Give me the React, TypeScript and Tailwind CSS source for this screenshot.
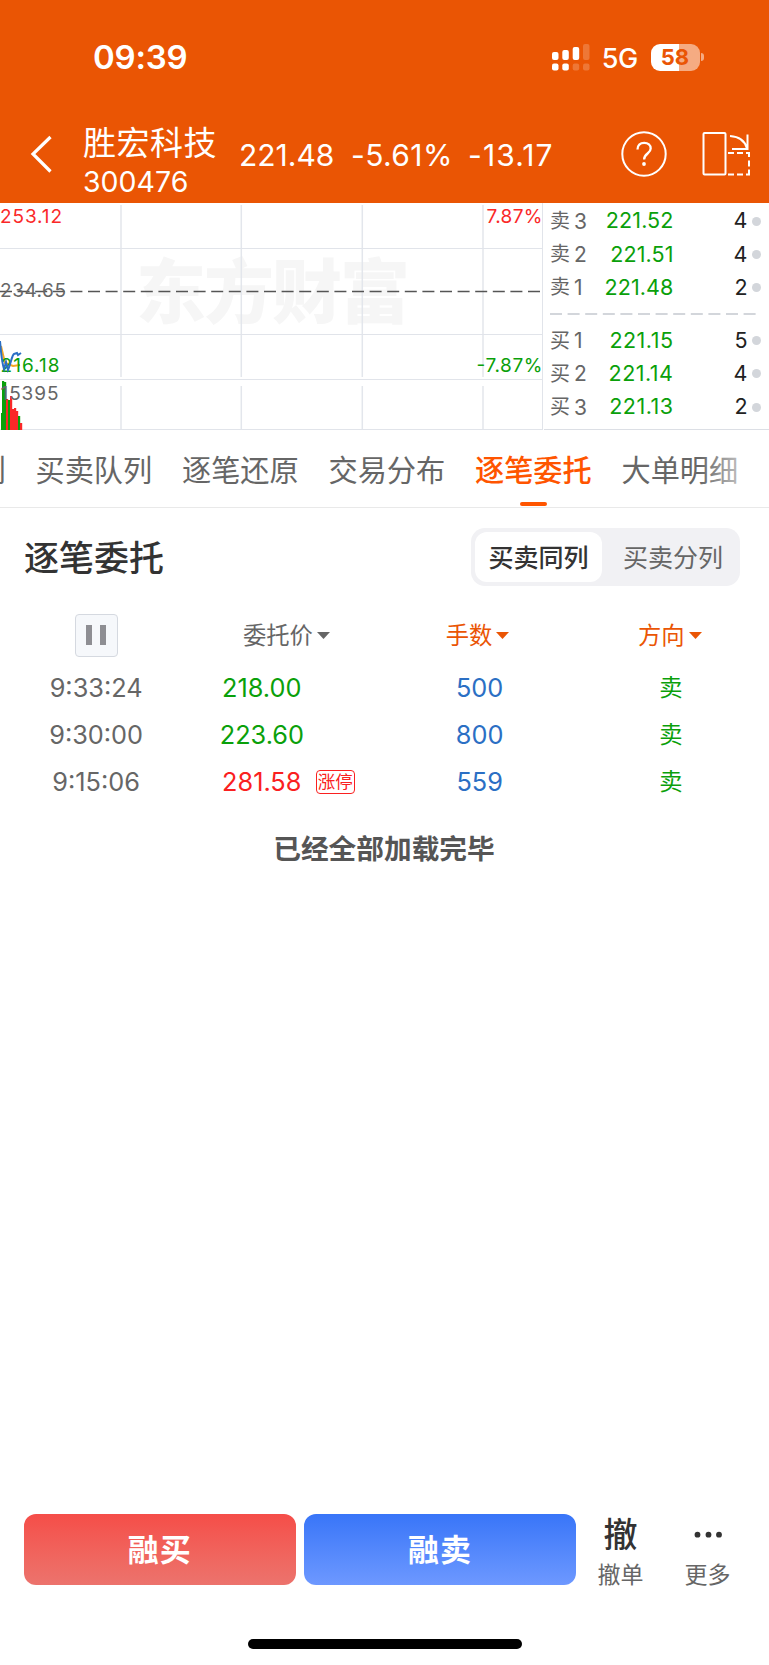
import React from 'react';

interface Quote {
  label: string;
  level: number;
  price: string;
  volume: number;
}

interface Order {
  time: string;
  price: string;
  volume: string;
  side: string;
  up?: boolean;
  tag?: string;
}

const asks: Quote[] = [
  { label: '卖', level: 3, price: '221.52', volume: 4 },
  { label: '卖', level: 2, price: '221.51', volume: 4 },
  { label: '卖', level: 1, price: '221.48', volume: 2 },
];

const bids: Quote[] = [
  { label: '买', level: 1, price: '221.15', volume: 5 },
  { label: '买', level: 2, price: '221.14', volume: 4 },
  { label: '买', level: 3, price: '221.13', volume: 2 },
];

const tabs = ['买卖队列', '逐笔还原', '交易分布', '逐笔委托', '大单明细'];

const orders: Order[] = [
  { time: '9:33:24', price: '218.00', volume: '500', side: '卖' },
  { time: '9:30:00', price: '223.60', volume: '800', side: '卖' },
  { time: '9:15:06', price: '281.58', volume: '559', side: '卖', up: true, tag: '涨停' },
];

// x, top, colour of each volume bar
const bars: [number, number, string][] = [
  [1, 210, '#0aa00a'],
  [2, 178, '#0aa00a'],
  [4, 179, '#0aa00a'],
  [6, 196, '#fa2828'],
  [8, 197, '#0aa00a'],
  [10, 193, '#fa2828'],
  [12, 206, '#fa2828'],
  [14, 205, '#fa2828'],
  [16, 208, '#fa2828'],
  [18, 213, '#0aa00a'],
  [20, 220, '#fa2828'],
];

const StatusBar: React.FC = () => (
  <div className="flex h-[114px] items-center pl-[93px] pr-[65px]">
    <span className="pt-[1px] text-[33px] font-semibold leading-none tracking-[-0.2px]">09:39</span>
    <div className="ml-auto flex items-center">
      <svg width="38" height="28" viewBox="0 0 38 28" fill="#fff">
        <rect x="0" y="9" width="6.5" height="8" rx="2" />
        <rect x="10.3" y="7" width="6.5" height="10" rx="2" />
        <rect x="20.7" y="4" width="6.5" height="13" rx="2" />
        <rect x="31" y="1" width="6.5" height="16" rx="2" opacity="0.2" />
        <rect x="0" y="20.5" width="6.5" height="7" rx="2" />
        <rect x="10.3" y="20.5" width="6.5" height="7" rx="2" />
        <rect x="20.7" y="20.5" width="6.5" height="7" rx="2" opacity="0.2" />
        <rect x="31" y="20.5" width="6.5" height="7" rx="2" opacity="0.2" />
      </svg>
      <span className="ml-[12px] mt-[2px] text-[27px] font-medium leading-none tracking-[-0.6px]">5G</span>
      <div className="ml-[13px] flex h-[27px] w-[49px] items-center justify-center rounded-[9px] bg-linear-to-r from-white from-58% to-[#f5ab82] to-58% text-[22px] font-bold leading-none text-[#ea5504]">
        58
      </div>
      <div className="ml-[1.5px] h-[8px] w-[3px] rounded-r-full bg-[#f5ab82]" />
    </div>
  </div>
);

const NavBar: React.FC = () => (
  <div className="flex h-[89px] items-center">
    <svg className="mb-[9px] ml-[30px]" width="22" height="38" viewBox="0 0 22 38" fill="none" stroke="#fff" strokeWidth="3.2">
      <path d="M20.500 2 3 19 20.500 36.500" />
    </svg>
    <div className="ml-[31px] mt-[8px] w-[156px]">
      <div className="text-[33px] leading-[38px] tracking-[0.5px]">胜宏科技</div>
      <div className="text-[28.5px] leading-[40px]">300476</div>
    </div>
    <div className="mb-[7px] flex gap-[17px] text-[30px] leading-none">
      <span className="w-[95px]">221.48</span>
      <span className="w-[100px] tracking-[0.4px]">-5.61%</span>
      <span className="tracking-[1.1px]">-13.17</span>
    </div>
    <svg className="mb-[9px] ml-auto" width="46" height="46" viewBox="0 0 46 46" fill="none" stroke="#fff" strokeWidth="2">
      <circle cx="23" cy="23" r="21.700" />
      <path d="M16.500 18.500c0-4 2.600-6.700 6.700-6.700 3.800 0 6.500 2.300 6.500 5.700 0 5.200-6.600 4.900-6.600 11" strokeWidth="2.300" />
      <circle cx="23" cy="33" r="1.900" fill="#fff" stroke="none" />
    </svg>
    <svg className="mb-[9px] ml-[34px] mr-[18px]" width="50" height="46" viewBox="0 0 50 46" fill="none" stroke="#fff" strokeWidth="2">
      <rect x="2.500" y="2" width="22" height="41.500" rx="1" />
      <path d="M29 5C37.500 5.500 44 10 46 17.500M46.500 3.500V18H31" />
      <path d="M27 22h6m3 0h6m3 0h3v4m0 3.500v6m0 3v5H45m-3 0h-6m-3 0h-6" />
    </svg>
  </div>
);

const MinuteChart: React.FC = () => (
  <svg className="shrink-0 font-['Inter','Noto_Sans_CJK_SC',sans-serif]" width="544" height="227" viewBox="0 0 544 227">
    <text x="136" y="115" textLength="274" className="fill-[#f6f6f6] text-[70px] font-black">东方财富</text>
    <g stroke="#e3e6ec" strokeWidth="1.5">
      <path d="M121 2V179M241.300 2V179M362.300 2V179M483 2V179" />
      <path d="M121 183V226M241.300 183V226M362.300 183V226M483 183V226" />
    </g>
    {/* white gutter between the price and volume panes */}
    <path d="M0 176.500H542" stroke="#fff" strokeWidth="5" />
    <g stroke="#e1e4ea" strokeWidth="1">
      <path d="M0 45.500H543M0 131.500H543M0 176.500H543M0 226.500H543M542.500 0V227" />
    </g>
    <path d="M0 88.500H540" stroke="#555" strokeWidth="1.300" strokeDasharray="12 5.600" />
    <path d="M1 143 5 160 13 163 20 162" stroke="#f5a623" strokeWidth="2" fill="none" />
    {bars.map(([x, y, color]) => (
      <rect key={x} x={x} y={y} width="2.200" height={227 - y} fill={color} />
    ))}
    <g className="text-[19px]">
      <text x="0" y="19.500" textLength="62" fill="#fa2828">253.12</text>
      <text x="542.500" y="19.500" textAnchor="end" textLength="56" fill="#fa2828">7.87%</text>
      <text x="0" y="94" textLength="66" fill="#666">234.65</text>
      <text x="0.500" y="169" textLength="59" fill="#0aa00a">216.18</text>
      <text x="542.500" y="169" textAnchor="end" textLength="66" fill="#0aa00a">-7.87%</text>
      <text x="0.500" y="197" textLength="58" fill="#666">15395</text>
    </g>
    <path d="M0 138C1 150 2 160 4 166L6 159 8 167C11 160 12 152 14 151L17 150 18 152 21 150" stroke="#2b6fc4" strokeWidth="2" fill="none" />
  </svg>
);

const QuoteRow: React.FC<{ quote: Quote; wide?: boolean }> = ({ quote, wide }) => (
  <div className="flex h-[33.200px] items-center leading-none">
    <span className="w-[24px] text-[20px] text-[#666]">{quote.label}</span>
    <span className="text-[21px] text-[#666]">{quote.level}</span>
    <span className={`ml-auto text-[21.500px] text-[#0aa00a] ${wide ? 'tracking-[0.5px]' : 'tracking-[0.1px]'}`}>{quote.price}</span>
    <span className="w-[74px] text-right text-[21.500px] text-[#222]">{quote.volume}</span>
    <span className="ml-[4px] h-[9px] w-[9px] rounded-full bg-[#d3d6db]" />
  </div>
);

const OrderBook: React.FC = () => (
  <div className="flex-1 border-b border-[#dcdfe5] pl-[6px] pr-[8.500px] pt-[1.500px]">
    {asks.map((q) => <QuoteRow key={q.level} quote={q} />)}
    <svg className="block" width="207" height="20" viewBox="0 0 207 20">
      <path d="M0 10H206" stroke="#d3d6db" strokeWidth="2" strokeDasharray="12 5.600" />
    </svg>
    {bids.map((q) => <QuoteRow key={q.level} quote={q} wide />)}
  </div>
);

const Tabs: React.FC = () => (
  <div className="relative flex h-[78px] overflow-hidden border-b border-[#e9e9e9]">
    <div className="-ml-[111px] flex shrink-0 gap-[29.500px] text-[29.200px] leading-[82px] text-[#666]">
      <span className="w-[117px] shrink-0">分时明列</span>
      {tabs.map((tab) => (
        <div key={tab} className="relative w-[117px] shrink-0 whitespace-nowrap">
          {tab === '逐笔委托' ? (
            <>
              <span className="font-medium text-[#ff5500]">{tab}</span>
              <div className="absolute left-[45px] top-[72px] h-[4px] w-[27px] rounded-full bg-[#ff5500]" />
            </>
          ) : tab}
        </div>
      ))}
    </div>
    <div className="absolute right-0 top-0 h-[70px] w-[70px] bg-linear-to-r from-white/0 to-white" />
  </div>
);

const Caret: React.FC = () => (
  <svg className="ml-[4px]" width="13" height="7" viewBox="0 0 13 7" fill="currentColor">
    <path d="M0 0H13L6.500 7Z" />
  </svg>
);

const OrderTable: React.FC = () => (
  <div>
    <div className="grid h-[55px] grid-cols-4 pb-[3px] text-[23.300px] leading-none text-[#666]">
      <div className="flex items-center justify-center">
        <div className="flex h-[43px] w-[43px] items-center justify-center gap-[8px] rounded-[4px] border border-[#d5d9e0] bg-[#f6f8fb]">
          <div className="h-[20px] w-[6px] bg-[#8e8e93]" />
          <div className="h-[20px] w-[6px] bg-[#8e8e93]" />
        </div>
      </div>
      <div className="flex items-center justify-center pr-[4px] pt-[1px]">委托价<Caret /></div>
      <div className="flex items-center justify-center pr-[6px] pt-[1px] text-[#ea5504]">手数<Caret /></div>
      <div className="flex items-center justify-center pr-[6px] pt-[1px] text-[#ea5504]">方向<Caret /></div>
    </div>
    {orders.map((order) => (
      <div key={order.time} className="grid h-[47px] grid-cols-4 text-[25.300px] leading-none">
        <div className="flex items-center justify-center text-[#666]">{order.time}</div>
        <div className={`flex items-center pl-[27.500px] ${order.up ? 'text-[#fa2020]' : 'text-[#0aa00a]'}`}>
          <span className="w-[84px] text-center">{order.price}</span>
          {order.tag && (
            <span className="ml-[12px] flex h-[24px] w-[39px] items-center justify-center rounded-[4px] border border-[#fa2020] text-[17.500px]">
              {order.tag}
            </span>
          )}
        </div>
        <div className="flex items-center justify-center pr-[2px] text-[#2b6fc4]">{order.volume}</div>
        <div className="flex items-center justify-center pr-[4px] pt-[1px] text-[23.300px] text-[#0aa00a]">{order.side}</div>
      </div>
    ))}
  </div>
);

const BottomBar: React.FC = () => (
  <div className="flex h-[71px] pl-[23.500px]">
    <button className="w-[272.500px] rounded-[12px] bg-linear-to-b from-[#f54d48] to-[#ec736d] text-[31px] font-bold leading-none tracking-[1px] text-white">融买</button>
    <button className="ml-[8px] w-[272px] rounded-[12px] bg-linear-to-b from-[#3875f8] to-[#6d98ff] text-[31px] font-bold leading-none tracking-[1px] text-white">融卖</button>
    <div className="ml-[21px] w-[47px] text-center">
      <div className="text-[34px] font-medium leading-[42px] text-[#333]">撤</div>
      <div className="text-[23px] leading-[38px] text-[#666]">撤单</div>
    </div>
    <div className="ml-[40px] w-[47px] text-center">
      <svg className="mx-auto block" width="28" height="42" viewBox="0 0 28 42" fill="#333">
        <circle cx="3.500" cy="20.700" r="2.900" />
        <circle cx="14.500" cy="20.700" r="2.900" />
        <circle cx="25" cy="20.700" r="2.900" />
      </svg>
      <div className="text-[23px] leading-[38px] text-[#666]">更多</div>
    </div>
  </div>
);

export default function App() {
  return (
    <div className="flex h-[1665px] w-[769px] flex-col overflow-hidden bg-white font-['Inter','Noto_Sans_CJK_SC',sans-serif]">
      <header className="h-[203px] shrink-0 bg-[#ea5504] text-white">
        <StatusBar />
        <NavBar />
      </header>
      <div className="flex h-[227px] shrink-0">
        <MinuteChart />
        <OrderBook />
      </div>
      <Tabs />
      <div className="flex items-center pl-[24px] pr-[29px] pt-[20px]">
        <h1 className="pt-[2px] text-[35px] font-medium leading-none text-[#333]">逐笔委托</h1>
        <div className="ml-auto flex h-[58px] w-[269px] rounded-[14px] bg-[#f1f1f4] p-[4px] text-[25px] leading-[52px]">
          <div className="h-[50px] w-[127px] rounded-[12px] bg-white text-center font-medium text-[#333]">买卖同列</div>
          <div className="flex-1 pl-[8px] text-center text-[#666]">买卖分列</div>
        </div>
      </div>
      <div className="pt-[23px]">
        <OrderTable />
      </div>
      <p className="pr-[1px] pt-[24px] text-center text-[27.700px] font-bold leading-[40px] text-[#555]">已经全部加载完毕</p>
      <div className="mt-auto">
        <BottomBar />
        <div className="mx-auto mb-[16px] mt-[54px] h-[10px] w-[274px] rounded-full bg-black" />
      </div>
    </div>
  );
}
